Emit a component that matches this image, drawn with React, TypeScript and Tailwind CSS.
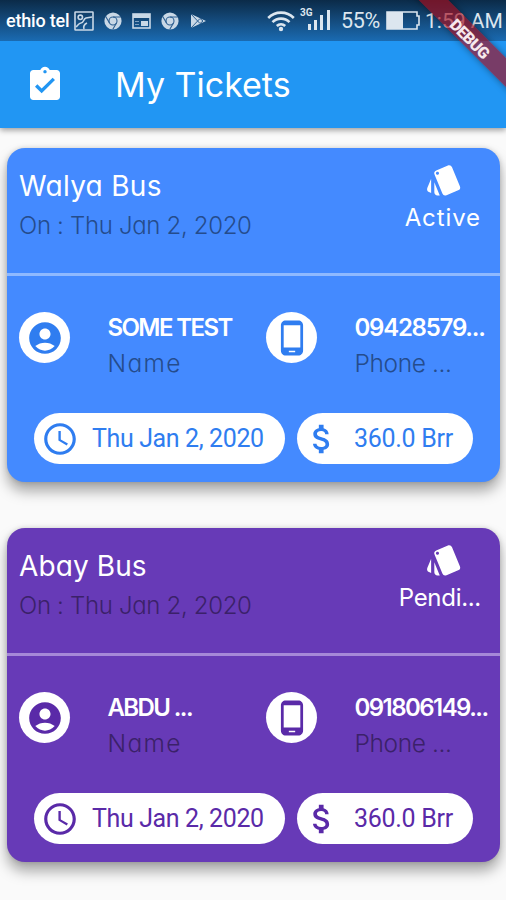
import React from "react";
import {
  MdAssignmentTurnedIn,
  MdStyle,
  MdAccountCircle,
  MdPhoneAndroid,
  MdAccessTime,
  MdAttachMoney,
} from "react-icons/md";

const geo = "font-['Inter','Noto_Sans',sans-serif] [font-feature-settings:'cv11'] whitespace-nowrap";

type Ticket = {
  bus: string;
  busSpacing: string;
  status: string;
  statusSpacing: string;
  name: string;
  nameSpacing: string;
  phone: string;
  phoneSpacing: string;
  bg: string;
  ink: string;
  muted: string;
  line: string;
};

const tickets: Ticket[] = [
  {
    bus: "Walya Bus",
    busSpacing: "tracking-[0.3px]",
    status: "Active",
    statusSpacing: "tracking-[0.9px]",
    name: "SOME TEST",
    nameSpacing: "tracking-[-1.6px]",
    phone: "09428579...",
    phoneSpacing: "tracking-[-1.25px]",
    bg: "bg-[#448aff]",
    ink: "text-[#2f7df0]",
    muted: "text-[#254c8c]",
    line: "bg-[#8fb9ff]",
  },
  {
    bus: "Abay Bus",
    busSpacing: "tracking-[0.1px]",
    status: "Pendi...",
    statusSpacing: "tracking-[-0.3px]",
    name: "ABDU ...",
    nameSpacing: "tracking-[-1.6px]",
    phone: "091806149...",
    phoneSpacing: "tracking-[-1.55px]",
    bg: "bg-[#673ab7]",
    ink: "text-[#5a2aa8]",
    muted: "text-[#3b2169]",
    line: "bg-[#a688d8]",
  },
];

function ChromeIcon() {
  return (
    <svg viewBox="0 0 18 18" className="h-[18px] w-[18px] shrink-0">
      <circle cx="9" cy="9" r="8.6" fill="#c9d8e6" />
      <g stroke="#2d5f91" strokeWidth="1.1" fill="none">
        <circle cx="9" cy="9" r="4" />
        <path d="M9 5h7.7M5.5 11 1.7 4.4M12.5 11 8.7 17.5" />
      </g>
      <circle cx="9" cy="9" r="2.5" fill="#c9d8e6" />
    </svg>
  );
}

function StatusBar() {
  return (
    <div className="flex h-[41px] items-center bg-linear-to-b from-[#0b2b48] via-[#144b7d] to-[#1a6bb2] pl-[6px] font-['Roboto',sans-serif] text-[#dce6ef]">
      <span className="w-[68px] whitespace-nowrap text-[18px] font-medium leading-[40px] tracking-[-0.2px] text-white">ethio tel</span>
      <svg viewBox="0 0 20 20" className="h-5 w-5 shrink-0" fill="none" stroke="#c9d8e6" strokeWidth="1.6">
        <rect x="1" y="1" width="18" height="18" rx="0.5" />
        <circle cx="6.3" cy="6.3" r="2.2" />
        <path d="M2 16c2-2 3-4 5-4 3 0 2-4 5-5l6-1M10 18c-1-3 1-5 3-6" />
      </svg>
      <div className="ml-[10px] flex items-center gap-[10px]">
        <ChromeIcon />
        <svg viewBox="0 0 19 16" className="h-4 w-[19px]">
          <rect x="1" y="1" width="17" height="14" fill="none" stroke="#c9d8e6" strokeWidth="1.6" />
          <path d="M1 1h17v4H1zM9 8h7v5H9z" fill="#c9d8e6" />
          <path d="M3 8.5h4M3 11.5h4" stroke="#7d9fc0" />
        </svg>
        <ChromeIcon />
        <svg viewBox="0 0 18 16" className="h-4 w-[18px]">
          <path d="M2 1v14L17 8z" fill="#c9d8e6" />
          <path d="M2 1l9 9.5M2 15l9-9.5M11 5.5 14 8l-3 2.5" stroke="#2d5f91" strokeWidth="1" fill="none" />
        </svg>
      </div>
      <svg viewBox="0 0 28 22" className="ml-[60px] h-[22px] w-7" fill="none" stroke="#dce6ef" strokeWidth="2.6">
        <path d="M1.2 8a18 18 0 0 1 25.6 0M5.5 12.2a12 12 0 0 1 17 0M9.8 16a6.2 6.2 0 0 1 8.4 0" />
        <circle cx="14" cy="19" r="2.2" fill="#dce6ef" stroke="none" />
      </svg>
      <div className="ml-[5px] flex h-[25px] w-[34px] items-start">
        <span className="w-[8px] text-[10px] font-bold leading-[10px]">3G</span>
        <svg viewBox="0 0 24 22" className="mt-[1px] h-[22px] w-6 shrink-0" fill="#dce6ef">
          <path d="M0 15h3v6H0zM6 11h3v10H6zM12 6h3v15h-3zM19 1h3v20h-3z" />
        </svg>
      </div>
      <span className="ml-[7px] w-[45px] whitespace-nowrap text-[21.5px] leading-[44px] tracking-[-0.3px]">55%</span>
      <svg viewBox="0 0 34 19" className="h-[19px] w-[34px] shrink-0">
        <path d="M1 1h30v4h2v9h-2v4H1z" fill="none" stroke="#dce6ef" strokeWidth="1.6" />
        <path d="M1 1h16v17H1z" fill="#dce6ef" />
      </svg>
      <span className="ml-[5px] whitespace-nowrap text-[21px] leading-[44px]">1:59 AM</span>
    </div>
  );
}

function Contact({ icon, title, label, spacing, ticket }: { icon: React.ReactNode; title: string; label: string; spacing: string; ticket: Ticket }) {
  return (
    <div className="flex w-[247px] shrink-0">
      <div className={`mt-[1px] flex h-[51px] w-[51px] shrink-0 items-center justify-center rounded-full bg-white ${ticket.ink}`}>{icon}</div>
      <div className={`ml-[37.5px] ${geo}`}>
        <div className={`h-[35px] text-[24px] font-semibold leading-[33px] text-white ${spacing}`}>{title}</div>
        <div className={`text-[24.5px] font-light leading-[35px] ${label === "Name" ? "tracking-[1.3px]" : "tracking-[-0.4px]"} ${ticket.muted}`}>{label}</div>
      </div>
    </div>
  );
}

function TicketCard({ ticket }: { ticket: Ticket }) {
  return (
    <section className={`h-[334px] w-[493px] overflow-hidden rounded-[18px] shadow-[0_9px_14px_rgba(0,0,0,0.34),0_0_5px_rgba(0,0,0,0.15)] ${ticket.bg}`}>
      <div className="flex h-[125px] justify-between pl-[12px] pr-[19px]">
        <div className={geo}>
          <div className={`mt-[18px] h-[42px] text-[28px] leading-[40px] text-white ${ticket.busSpacing}`}>{ticket.bus}</div>
          <div className={`text-[24px] font-light leading-[35px] tracking-[-0.33px] ${ticket.muted}`}>On : Thu Jan 2, 2020</div>
        </div>
        <div className="flex flex-col items-end text-white">
          <MdStyle className="mr-[18px] mt-[13px] h-[38px] w-[38px]" />
          <div className={`text-[24px] leading-[38px] ${geo} ${ticket.statusSpacing}`}>{ticket.status}</div>
        </div>
      </div>
      <div className={`h-[3px] ${ticket.line}`} />
      <div className="flex pl-[12px] pt-[35px]">
        <Contact ticket={ticket} icon={<MdAccountCircle className="h-[38px] w-[38px]" />} title={ticket.name} label="Name" spacing={ticket.nameSpacing} />
        <Contact ticket={ticket} icon={<MdPhoneAndroid className="h-[38px] w-[38px]" />} title={ticket.phone} label="Phone ..." spacing={ticket.phoneSpacing} />
      </div>
      <div className={`ml-[27px] mt-[32px] flex gap-3 font-['Roboto',sans-serif] text-[25px] font-normal ${ticket.ink}`}>
        <div className="flex h-[51px] w-[251px] items-center whitespace-nowrap rounded-full bg-white pl-[7px]">
          <MdAccessTime className="h-[38px] w-[38px] shrink-0" />
          <span className="ml-[13px] tracking-[-0.38px]">Thu Jan 2, 2020</span>
        </div>
        <div className="flex h-[51px] w-[176px] items-center whitespace-nowrap rounded-full bg-white pl-[6px]">
          <MdAttachMoney className="h-[38px] w-[38px] shrink-0" />
          <span className="ml-[13px] tracking-[-0.3px]">360.0 Brr</span>
        </div>
      </div>
    </section>
  );
}

export default function App() {
  return (
    <main className="relative h-[900px] w-[506px] overflow-hidden bg-[#fafafa]">
      <header className="bg-[#2196f3] shadow-[0_2px_6px_rgba(0,0,0,0.4)]">
        <StatusBar />
        <div className="flex h-[87px] items-center pl-[25px] text-white">
          <MdAssignmentTurnedIn className="h-10 w-10" />
          <h1 className={`ml-[50px] text-[34px] font-normal leading-[48px] tracking-[0px] ${geo}`}>My Tickets</h1>
        </div>
      </header>
      <div className="flex flex-col gap-[46px] pl-[7px] pt-[20px]">
        {tickets.map((t) => (
          <TicketCard key={t.bus} ticket={t} />
        ))}
      </div>
      <div className="absolute left-[391px] top-[27px] flex h-[21px] w-[160px] rotate-45 items-center justify-center bg-[#a80c1c]/65 pt-[4px] shadow-[0_0_7px_rgba(0,0,0,0.4)]">
        <span className="font-['Roboto',sans-serif] text-[16px] font-black leading-none tracking-[-0.6px] text-[#f6e8ec]">DEBUG</span>
      </div>
    </main>
  );
}
